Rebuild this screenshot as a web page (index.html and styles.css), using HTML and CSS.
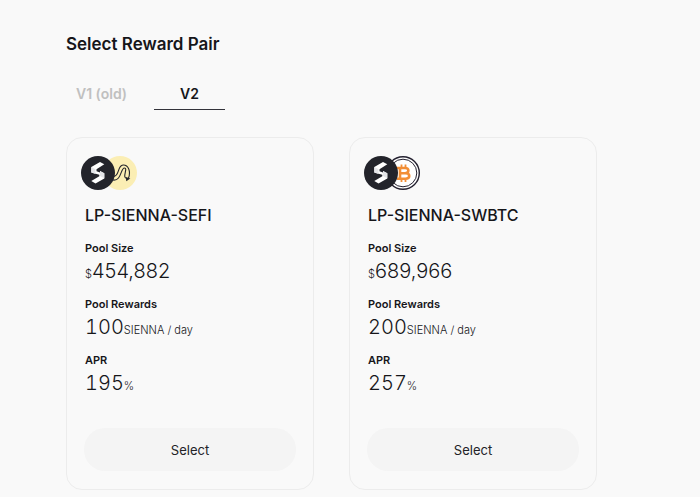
FILE: index.html
```html
<!DOCTYPE html>
<html lang="en">
<head>
  <meta charset="UTF-8" />
  <meta name="viewport" content="width=device-width, initial-scale=1.0" />
  <title>Select Reward Pair</title>
  <link rel="stylesheet" href="styles.css">
</head>
<body>
  <main class="rewards">
    <h1>Select Reward Pair</h1>

    <nav class="tabs">
      <a href="#v1" class="tab">V1 (old)</a>
      <a href="#v2" class="tab active">V2</a>
    </nav>

    <div class="cards">
      <section class="card">
        <div class="icons">
          <svg class="coin front" viewBox="0 0 34 34" aria-hidden="true">
            <circle cx="17" cy="17" r="17" fill="#23242b"/>
            <path d="M10.3 11 19 6l4.300 2.300-7.800 4.900v2l3.500 1.300V15l4.300 2.300v5.200l-8.800 4.900-4.200-2.400 8-4.800v-1.400l-8-2.400z" fill="#fff"/>
            <path d="M10.300 11l4.200 2.300v4.600l-4.200-1.500zM19 15l4.300 2.300v5L19 20z" fill="#e4e5e8"/>
          </svg>
          <svg class="coin" viewBox="0 0 34 34" aria-hidden="true">
            <circle cx="17" cy="17" r="17" fill="#fbeeb4"/>
            <g fill="none" stroke="#23242b" stroke-width="1.1" stroke-linecap="round">
              <path d="M10 20.500c7 0 4-11 10-11.500 5.500-.300 8 6.500 5.500 13"/>
              <path d="M10 24c8.500 1.300 7.500-12 11.500-12 4 0-3.500 10.500 3 10.500"/>
            </g>
            <path d="M22.800 21 27.300 22.500 23.300 25.200z" fill="#23242b"/>
          </svg>
        </div>
        <h2>LP-SIENNA-SEFI</h2>
        <dl>
          <dt>Pool Size</dt>
          <dd><small>$</small>454,882</dd>
          <dt>Pool Rewards</dt>
          <dd class="count">100<small>SIENNA / day</small></dd>
          <dt>APR</dt>
          <dd class="count">195<small>%</small></dd>
        </dl>
        <button type="button">Select</button>
      </section>

      <section class="card">
        <div class="icons">
          <svg class="coin front" viewBox="0 0 34 34" aria-hidden="true">
            <circle cx="17" cy="17" r="17" fill="#23242b"/>
            <path d="M10.3 11 19 6l4.300 2.300-7.800 4.900v2l3.500 1.300V15l4.300 2.300v5.200l-8.800 4.900-4.200-2.400 8-4.800v-1.400l-8-2.400z" fill="#fff"/>
            <path d="M10.300 11l4.200 2.300v4.600l-4.200-1.500zM19 15l4.300 2.300v5L19 20z" fill="#e4e5e8"/>
          </svg>
          <svg class="coin" viewBox="0 0 34 34" aria-hidden="true">
            <circle cx="17" cy="17" r="16.300" fill="#fff" stroke="#23202f" stroke-width="1.400"/>
            <circle cx="17" cy="17" r="13.800" fill="none" stroke="#23202f" stroke-width="1"/>
            <g fill="none" stroke="#f28e35" stroke-width="2.600">
              <path d="M11 12h8c4.500 0 4.500 5.200 0 5.200h-5 5.500c5 0 5 5.500 0 5.500H11M14 12V22.700"/>
              <path d="M15.500 8.500v3M19.500 8.500v3M15.500 23v3M19.500 23v3" stroke-width="1.800"/>
            </g>
          </svg>
        </div>
        <h2>LP-SIENNA-SWBTC</h2>
        <dl>
          <dt>Pool Size</dt>
          <dd><small>$</small>689,966</dd>
          <dt>Pool Rewards</dt>
          <dd class="count">200<small>SIENNA / day</small></dd>
          <dt>APR</dt>
          <dd class="count">257<small>%</small></dd>
        </dl>
        <button type="button">Select</button>
      </section>
    </div>
  </main>
</body>
</html>
```

FILE: styles.css
```css
* {
  box-sizing: border-box;
}
body {
  margin: 0;
  background-color: #f9f9f9;
  color: #16161a;
  font-family: Inter, sans-serif;
}
.rewards {
  padding: 32px 103px 6px 66px;
}
h1 {
  margin: 0;
  font-size: 17px;
  font-weight: 600;
  line-height: 24px;
}
.tabs {
  display: flex;
  gap: 17px;
  margin-top: 22px;
}
.tab {
  min-width: 71px;
  padding: 4px 0;
  border-bottom: 1px solid transparent;
  color: #c0c0c0;
  font-size: 14px;
  font-weight: 600;
  line-height: 23px;
  text-align: center;
  text-decoration: none;
}
.tab.active {
  border-color: #33333a;
  color: #16161a;
}
.cards {
  display: grid;
  grid-template-columns: 1fr 1fr;
  gap: 35px;
  margin-top: 27px;
}
.card {
  padding: 18px 17px;
  border: 1px solid #ececec;
  border-radius: 16px;
}
.icons {
  display: flex;
  margin-left: -3px;
}
.coin {
  width: 34px;
  height: 34px;
}
.front {
  z-index: 1;
  margin-right: -12px;
}
h2 {
  margin: 13px 1px 12px;
  font-size: 16px;
  font-weight: 500;
  line-height: 24px;
}
dl {
  margin: 0 1px;
}
dt {
  font-size: 11px;
  font-weight: 600;
  line-height: 18px;
}
dd {
  margin: 0 0 10px;
  font-size: 20px;
  font-weight: 300;
  line-height: 28px;
}
.count {
  font-variant-numeric: tabular-nums;
}
small {
  font-size: 11px;
  font-variant-numeric: normal;
  line-height: 1;
}
button {
  width: 100%;
  height: 43px;
  margin-top: 21px;
  border: none;
  border-radius: 21px;
  background-color: #f4f4f4;
  color: #222226;
  font-family: inherit;
  font-size: 13px;
  cursor: pointer;
}
```
